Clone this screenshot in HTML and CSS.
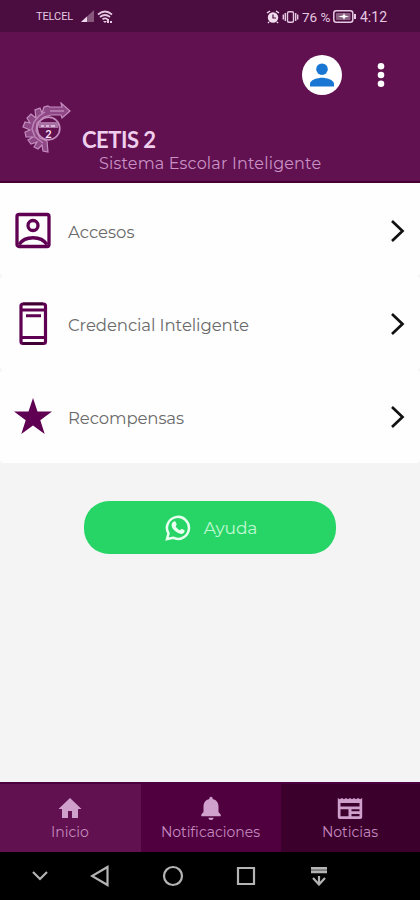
FILE: index.html
```html
<!DOCTYPE html>
<html lang="es">
<head>
<meta charset="utf-8">
<meta name="viewport" content="width=device-width, initial-scale=1">
<title>CETIS 2</title>
<link rel="stylesheet" href="styles.css">
</head>
<body>
<div class="phone">
  <div class="status">
    <span class="carrier">TELCEL</span>
    <svg class="signal" width="32" height="14" viewBox="0 0 32 14">
      <path d="M0 12 13 0v12z" fill="#87577e"/><path d="M0 12 6 6.500v5.500z" fill="#efd8ed"/>
      <g fill="none" stroke="#e5c9e2" stroke-width="1.700"><path d="M17 4.500q7-6 14 0M19 7q5-4 10 0M21.500 9.300q2.500-2 5 0"/></g>
      <path d="m22 11 2 2 2-2zM26 9h2v4h-2zm3 2h2v2h-2z" fill="#e5c9e2"/>
    </svg>
    <span class="spacer"></span>
    <svg class="alarm" width="33" height="14" viewBox="0 0 33 14">
      <circle cx="7" cy="7.500" r="5.200" fill="#f0dced"/><path d="m1 3 3-2m6 0 3 2M3 12l-1 1m9-1 1 1" stroke="#f0dced" stroke-width="1.500"/><path d="M7 4.500v3.500h3" fill="none" stroke="#4b0c3f" stroke-width="1.200"/>
      <g fill="none" stroke="#e5c9e2" stroke-width="1.400"><rect x="21.500" y="1.700" width="6" height="10.600" rx="1.500"/><path d="M19.300 3v8M17.300 4.500v5M29.700 3v8M31.700 4.500v5"/></g>
    </svg>
    <span class="percent">76 %</span>
    <svg class="battery" width="24" height="13" viewBox="0 0 24 13"><rect x=".8" y=".8" width="19" height="11.400" rx="2.500" fill="none" stroke="#e5c9e2" stroke-width="1.500"/><rect x="3" y="3" width="14.500" height="7" rx="1" fill="#896080"/><path d="m5 6.500 5-1 1-2.500 1 2.500 4 1-4 1-1 2.500-1-2.500z" fill="#fff"/><path d="M22 4v5" stroke="#e5c9e2" stroke-width="2"/></svg>
    <span class="clock">4:12</span>
  </div>

  <header class="header">
    <div class="actions">
      <span class="avatar"><svg width="24" height="24" viewBox="0 0 24 24" fill="#1976d2"><circle cx="12" cy="6.200" r="5.800"/><path d="M0 23.500v-2.800c0-4 8-6 12-6s12 2 12 6v2.800z"/></svg></span>
      <svg class="more" width="8" height="26" viewBox="0 0 8 26" fill="#fff"><circle cx="4" cy="4.200" r="3.300"/><circle cx="4" cy="13" r="3.300"/><circle cx="4" cy="21.800" r="3.300"/></svg>
    </div>
    <div class="brand">
      <svg class="logo" width="50" height="52" viewBox="0 0 50 52">
        <path d="M26 4 28 5 40 5 39 1 48 9 40 16 39 13 29 13 22 15 15 21 14 29 18 36 25 39 26 50 21 49 20 43 16 47 12 45 15 40 9 42 6 38 11 35 4 35 3 30 8 28 1 25 3 20 8 21 5 16 9 12 14 16 13 8 18 6 20 11 22 5z" fill="#8f4886" stroke="#c58ebe" stroke-width="1.200"/>
        <path d="M28 9h14M23 10l-6 4-5 6-2 7 3 8 8 6" fill="none" stroke="#bd84b7" stroke-width="1.500"/>
        <circle cx="26.500" cy="26.500" r="11.300" fill="#611150" stroke="#c58ebe" stroke-width="1.700"/>
        <path d="M17 20h19v6H17z" fill="#a971a3"/><path d="M19 24h3m2 0h3m2 0h4" stroke="#e9cde6" stroke-width="1.600"/>
        <text x="26.500" y="36" text-anchor="middle" class="logo-number">2</text>
      </svg>
      <div class="titles"><h1>CETIS 2</h1><p><span class="subtitle">Sistema Escolar Inteligente</span></p></div>
    </div>
  </header>

  <main class="content">
    <div class="row">
      <svg class="row-icon" width="38" height="46" viewBox="0 0 38 46" fill="none" stroke="#600052" stroke-width="3.300"><rect x="3" y="6.500" width="32" height="32" rx="2"/><circle cx="19" cy="17.500" r="5"/><path d="M5 36.500c6-9 22-9 28 0"/></svg>
      <span class="label accesos">Accesos</span>
      <svg class="chevron" width="16" height="24" viewBox="0 0 16 24"><path d="m2 2 10.500 10L2 22"/></svg>
    </div>
    <div class="row">
      <svg class="row-icon" width="38" height="46" viewBox="0 0 38 46" fill="none" stroke="#600052" stroke-width="3.200"><rect x="7" y="3" width="24.500" height="39.500" rx="2"/><path d="M7 9h24M7 36.500h24M12 14.800h15" stroke-width="3"/><path d="M9 2.800h20M9 42.500h20" stroke="#3b0032" stroke-width="2.500"/></svg>
      <span class="label credencial">Credencial Inteligente</span>
      <svg class="chevron" width="16" height="24" viewBox="0 0 16 24"><path d="m2 2 10.500 10L2 22"/></svg>
    </div>
    <div class="row">
      <svg class="row-icon" width="38" height="46" viewBox="0 0 38 46"><path d="m19 4 4.500 13.600H38l-11.700 8.600 4.400 13.800L19 31.600 7.300 40l4.400-13.800L0 17.600h14.500z" fill="#600052"/></svg>
      <span class="label recompensas">Recompensas</span>
      <svg class="chevron" width="16" height="24" viewBox="0 0 16 24"><path d="m2 2 10.500 10L2 22"/></svg>
    </div>
    <button class="help">
      <svg width="26" height="26" viewBox="0 0 26 26"><path d="M2 24 3.500 18.500A11 11 0 1 1 8 22.700z" fill="none" stroke="#e9fff0" stroke-width="2.500"/><path d="M8.700 6.500c.8-.5 1.600-.4 2 .5l1 2.300c.2.700-.8 1.500-1 2 .8 1.800 2.200 3.100 4.200 4 .6-.3 1.200-1.600 1.900-1.400l2.500 1.200c.7.500.2 2.200-.6 2.900-2.300 2-6.100.4-8.600-1.900-2.100-2-4.200-4.700-3.300-7.400.3-.9 1-1.700 1.900-2.200z" fill="#e9fff0"/></svg>
      <span>Ayuda</span>
    </button>
  </main>

  <nav class="tabs">
    <div class="tab home"><svg width="24" height="24" viewBox="0 0 24 24"><path d="M10 22v-7h4v7h6v-9h3.500L12 2 .5 13H4v9z"/></svg><span>Inicio</span></div>
    <div class="tab alerts"><svg width="24" height="24" viewBox="0 0 24 24"><path d="M12 24c1.500 0 2.500-1 2.500-2.300h-5C9.500 23 10.500 24 12 24zm7.500-8v-5.500c0-3.700-2-6.700-5.800-7.500V2.500a1.700 1.700 0 0 0-3.400 0V3C6.500 3.800 4.500 6.800 4.500 10.500V16l-2.200 2.500v1.700h19.400v-1.700z"/></svg><span>Notificaciones</span></div>
    <div class="tab news"><svg width="26" height="24" viewBox="0 0 26 24"><path fill-rule="evenodd" d="M.8 2l2 1.300L4.900 2 7 3.300 9 2l2 1.300L13 2l2 1.300L17 2l2 1.300L21.100 2l2 1.300L25.200 2v19a2 2 0 0 1-2 2H2.800a2 2 0 0 1-2-2zM3.500 7v3.500h19V7zm0 6.200v7h8v-7zm11 0v2h8v-2zm0 4.700v2.300h8v-2.300z"/></svg><span>Noticias</span></div>
  </nav>

  <div class="system">
    <svg width="16" height="10" viewBox="0 0 16 10"><path d="m1 1 7 7 7-7"/></svg>
    <svg width="20" height="22" viewBox="0 0 20 22"><path d="M17.500 2v18L2 11z"/></svg>
    <svg width="22" height="22" viewBox="0 0 22 22"><circle cx="11" cy="11" r="9"/></svg>
    <svg width="20" height="20" viewBox="0 0 20 20"><path d="M2 2h16v16H2z"/></svg>
    <svg width="18" height="20" viewBox="0 0 18 20"><path class="tray" d="M1 4h16"/><path d="M1 2.200h16M1 6.200h16M9 10v9M3 12l6 6.500 6-6.500"/></svg>
  </div>
</div>
</body>
</html>
```
FILE: styles.css
```css
* { box-sizing: border-box; }
body { margin: 0; font-family: Montserrat, Inter, "Open Sans", sans-serif; }
h1, p { margin: 0; }
svg { display: block; flex: none; }
.phone { width: 420px; height: 900px; display: flex; flex-direction: column; background: #f4f4f4; overflow: hidden; }
.status { height: 32px; display: flex; align-items: center; padding: 1px 34px 0 36px; background: #4b0c3f; color: #e5c9e2; font-family: Roboto, sans-serif; white-space: nowrap; }
.carrier { width: 36px; font-size: 11px; letter-spacing: -.1px; }
.signal { margin-left: 9px; }
.spacer { flex: 1; }
.percent { width: 28px; margin-left: 3px; font-size: 13.5px; }
.battery { margin-left: 3px; }
.clock { width: 26px; margin-left: 3px; font-size: 14px; }
.header { height: 151px; background: #611150; border-bottom: 2px solid #470037; color: #f0ceed; }
.actions { height: 66px; display: flex; justify-content: flex-end; align-items: flex-start; gap: 35px; padding: 23px 35px 0 0; }
.avatar { width: 40px; height: 40px; border-radius: 50%; background: #fff; display: grid; place-items: center; }
.more { margin-top: 7px; }
.brand { display: flex; padding: 4px 0 0 22px; }
.logo-number { font: 700 11px Lato, sans-serif; fill: #f5dff2; }
.titles { padding: 25px 0 0 10px; white-space: nowrap; }
h1 { font: 700 22px/26px Lato, sans-serif; letter-spacing: -.5px; }
.titles p { padding-left: 17px; font-size: 16px; line-height: 22px; color: #c991c5; }
.subtitle { letter-spacing: .18px; }
.content { flex: 1; }
.row { height: 93.333px; display: flex; align-items: center; padding: 0 14px; background: #fefefe; border-radius: 4px; }
.row:first-child { border-top-left-radius: 0; border-top-right-radius: 0; }
.row-icon { margin-top: 2px; }
.label { flex: 1; margin: 4px 0 0 16px; font-size: 16.5px; font-weight: 400; color: #6a6a6a; }
.accesos { letter-spacing: 0; }
.credencial { letter-spacing: -.08px; }
.recompensas { letter-spacing: -.1px; }
.chevron { fill: none; stroke: #111; stroke-width: 2.7; margin-top: 2px; }
.help { width: 252px; height: 53px; display: flex; align-items: center; justify-content: center; gap: 13px; margin: 38px auto 0; padding: 1px 0 0 2px; border: 0; border-radius: 25px; background: #27d567; color: #c0f8d2; font: 400 17px Montserrat, Inter, sans-serif; letter-spacing: -.1px; }
.tabs { height: 70px; display: grid; grid-template-columns: 141px 140px 139px; border-top: 2px solid #4b0040; color: #c48abf; }
.tab { display: flex; flex-direction: column; align-items: center; padding: 12px 1px 0 0; font-size: 14px; line-height: 24px; }
.tab svg { fill: #d0a0cc; }
.home { background: #611150; }
.alerts { background: #50003f; }
.news { background: #3c002d; }
.system { height: 48px; display: grid; grid-template-columns: 80px 40px 106px 40px 106px; align-items: center; justify-items: center; background: #000; }
.system svg { fill: none; stroke: #b4b4b4; stroke-width: 2.2; }
.system .tray { stroke: #777; stroke-width: 4; }
```
